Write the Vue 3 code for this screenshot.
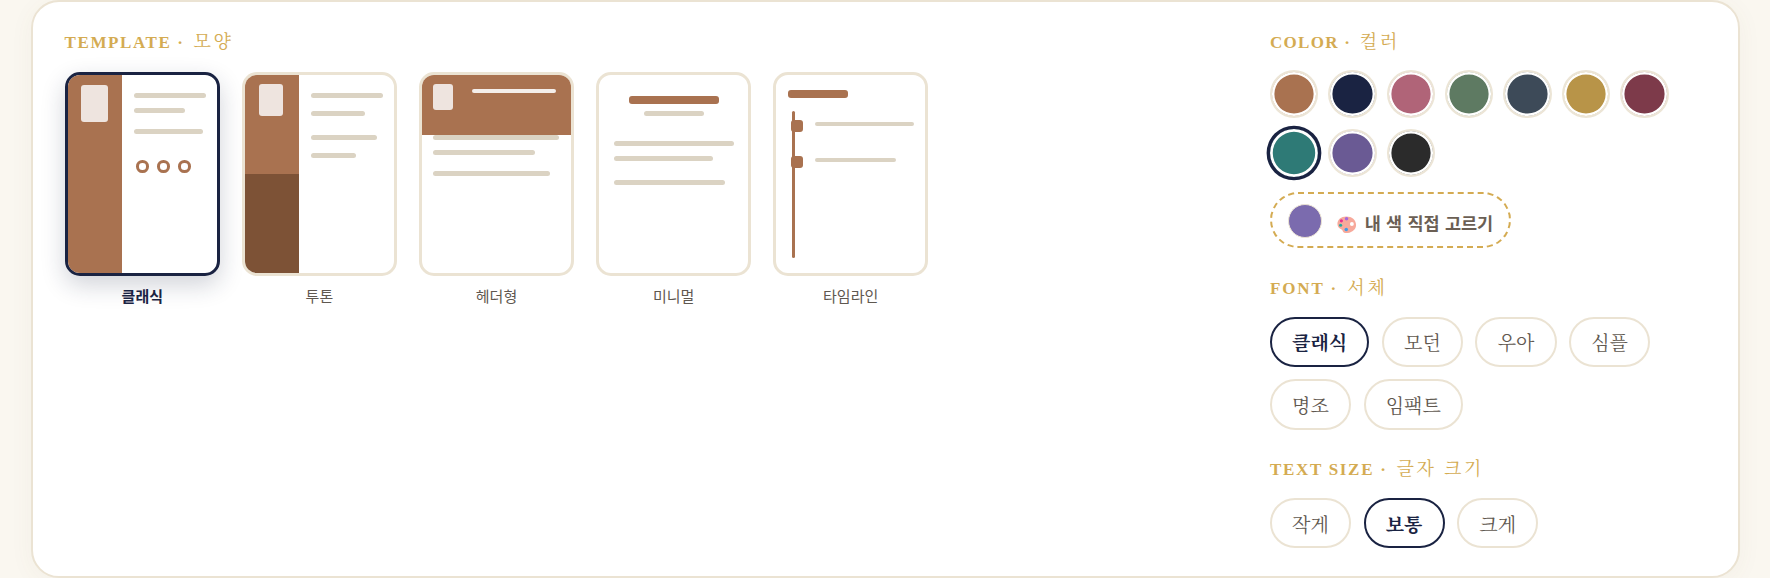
<script setup>
const swatches = [
  { c: '#a97250' }, { c: '#1a2342' }, { c: '#b06478' }, { c: '#5e7a62' }, { c: '#3d4a58' },
  { c: '#b89448' }, { c: '#7d3a4a' }, { c: '#2e7a76', active: true }, { c: '#6a5a94' }, { c: '#2b2b2b' },
]
const fonts = [
  { t: '클래식', active: true }, { t: '모던' }, { t: '우아' }, { t: '심플' }, { t: '명조' }, { t: '임팩트' },
]
const sizes = [{ t: '작게' }, { t: '보통', active: true }, { t: '크게' }]
const lines = (arr) => arr.map(([w, mt]) => ({ width: w + 'px', marginTop: mt + 'px' }))
const classic = lines([[72, 0], [51, 10.5], [69, 16.5]])
const twotone = lines([[72, 0], [54, 13.5], [66, 19.5], [45, 13.5]])
const header = lines([[126, 0], [102, 10.5], [117, 16.5]])
const minimal = lines([[120, 0], [99, 10.5], [111, 19.5]])
const timeline = [{ width: '99px' }, { width: '81px' }]
</script>

<template>
  <div class="page">
    <section class="card">
      <div class="left">
        <h3 class="label"><span class="en">TEMPLATE · </span><span class="ko">모양</span></h3>
        <div class="thumbs">
          <div class="thumb-item active">
            <div class="thumb t-classic">
              <div class="side"><div class="photo"></div></div>
              <div class="main">
                <div v-for="(s, i) in classic" :key="i" class="line" :style="s"></div>
                <div class="dots"><i></i><i></i><i></i></div>
              </div>
            </div>
            <div class="thumb-name">클래식</div>
          </div>
          <div class="thumb-item">
            <div class="thumb t-two">
              <div class="side">
                <div class="side-top"><div class="photo"></div></div>
                <div class="side-bottom"></div>
              </div>
              <div class="main">
                <div v-for="(s, i) in twotone" :key="i" class="line" :style="s"></div>
              </div>
            </div>
            <div class="thumb-name">투톤</div>
          </div>
          <div class="thumb-item">
            <div class="thumb t-header">
              <div class="head">
                <div class="photo"></div>
                <div class="white-line"></div>
              </div>
              <div class="main">
                <div v-for="(s, i) in header" :key="i" class="line" :style="s"></div>
              </div>
            </div>
            <div class="thumb-name">헤더형</div>
          </div>
          <div class="thumb-item">
            <div class="thumb t-minimal">
              <div class="title"></div>
              <div class="sub"></div>
              <div class="main">
                <div v-for="(s, i) in minimal" :key="i" class="line" :style="s"></div>
              </div>
            </div>
            <div class="thumb-name">미니멀</div>
          </div>
          <div class="thumb-item">
            <div class="thumb t-time">
              <div class="title"></div>
              <div class="track">
                <div class="rail"></div>
                <div v-for="(s, i) in timeline" :key="i" class="event">
                  <b class="node"></b>
                  <div class="line" :style="s"></div>
                </div>
              </div>
            </div>
            <div class="thumb-name">타임라인</div>
          </div>
        </div>
      </div>

      <div class="right">
        <h3 class="label color-label"><span class="en">COLOR · </span><span class="ko">컬러</span></h3>
        <div class="swatches">
          <button
            v-for="s in swatches"
            :key="s.c"
            class="swatch"
            :class="{ active: s.active }"
            :style="{ backgroundColor: s.c }"
          ></button>
        </div>
        <div class="custom">
          <span class="custom-dot"></span>
          <svg class="palette" viewBox="0 0 20 18" aria-hidden="true">
            <path d="M9.5 0.5C4.2 0.5 0.4 3.6 0.4 8.2c0 3.2 2.2 4.6 3.8 5.4 1.4.7 1.5 1.5 1.9 2.4.5 1.1 1.7 1.6 3.2 1.6 5.6 0 10.3-3.6 10.3-8.4C19.6 4 15.2.5 9.500.5z" fill="#f7a99b"/>
            <circle cx="15.3" cy="8.2" r="2" fill="#fff"/>
            <circle cx="9.8" cy="2.7" r="1.8" fill="#a668dc"/>
            <circle cx="4.5" cy="5" r="1.6" fill="#e8308f"/>
            <circle cx="3.7" cy="9.5" r="1.6" fill="#22a8a0"/>
            <circle cx="9.5" cy="14" r="1.8" fill="#3f9be6"/>
          </svg>
          <span class="custom-text">내 색 직접 고르기</span>
        </div>

        <h3 class="label font-label"><span class="en">FONT · </span><span class="ko">서체</span></h3>
        <div class="pills font-pills">
          <button v-for="f in fonts" :key="f.t" class="pill" :class="{ active: f.active }">{{ f.t }}</button>
        </div>

        <h3 class="label size-label"><span class="en">TEXT SIZE · </span><span class="ko">글자 크기</span></h3>
        <div class="pills size-pills">
          <button v-for="f in sizes" :key="f.t" class="pill" :class="{ active: f.active }">{{ f.t }}</button>
        </div>
      </div>
    </section>
  </div>
</template>

<style>
html, body { margin: 0; background: #faf7f0; overflow: hidden; }
</style>

<style scoped>
.page {
  height: 578px;
  padding: 0 30.5px;
  box-sizing: border-box;
  background: #faf7f0;
  overflow: hidden;
}
.card {
  box-sizing: border-box;
  height: 577.5px;
  background: #fff;
  border: 2px solid #ebe3d3;
  border-radius: 28px;
  padding: 28px 32px 0;
  display: flex;
  justify-content: space-between;
  box-shadow: 0 4px 24px rgba(120, 95, 60, 0.05);
}
.label {
  margin: 0;
  height: 24px;
  line-height: 20.5px;
  font-size: 17px;
  font-weight: 700;
  color: #d4ab52;
  letter-spacing: 1.6px;
  white-space: pre;
  font-family: "Liberation Serif", "Noto Serif CJK KR", serif;
}
.color-label { letter-spacing: 1.3px; }
.font-label { letter-spacing: 1.9px; }
.size-label { letter-spacing: 1.7px; }
.label .ko {
  font-size: 18px;
  font-weight: 400;
  letter-spacing: 2.7px;
  margin-left: 3px;
  font-family: "Noto Serif CJK KR", "Noto Sans CJK KR", serif;
}
.thumbs { display: flex; gap: 21.5px; margin-top: 18px; }
.thumb-item { width: 155.6px; text-align: center; }
.thumb {
  box-sizing: border-box;
  width: 155.6px;
  height: 204px;
  border: 3px solid #ebe3d3;
  border-radius: 15px;
  overflow: hidden;
  background: #fff;
}
.active .thumb {
  border-color: #1a2342;
  box-shadow: 0 9px 24px rgba(26, 35, 66, 0.2);
}
.thumb-name {
  margin-top: 9px;
  height: 22px;
  line-height: 22px;
  font-size: 15px;
  color: #5f5850;
  font-family: "Noto Sans CJK KR", sans-serif;
}
.active .thumb-name { color: #1a2342; font-weight: 700; }
.photo { background: #eee4df; border-radius: 3px; }
.line { height: 4.5px; border-radius: 3px; background: #dbd3c3; }

.t-classic, .t-two { display: flex; }
.t-classic .side { width: 54px; background: #a97250; padding: 10px 0 0 13.5px; box-sizing: border-box; }
.t-classic .photo { width: 27px; height: 36.5px; }
.t-classic .main { padding: 18px 0 0 12px; }
.dots { display: flex; gap: 8.5px; margin: 26.8px 0 0 2.8px; }
.dots i {
  box-sizing: border-box;
  flex: none;
  width: 12.6px;
  height: 12.6px;
  border: 3.2px solid #a97250;
  border-radius: 50%;
}

.t-two .side { width: 54px; display: flex; flex-direction: column; }
.side-top { height: 99px; background: #a97250; padding: 9px 0 0 14.5px; box-sizing: border-box; }
.side-top .photo { width: 24px; height: 31.7px; }
.side-bottom { flex: 1; background: #7d5236; }
.t-two .main { padding: 18px 0 0 12px; }

.head {
  height: 60px;
  background: #a97250;
  display: flex;
  align-items: flex-start;
  padding: 9px 0 0 11.5px;
  box-sizing: border-box;
}
.head .photo { width: 19.5px; height: 25.7px; }
.white-line { width: 84px; height: 4.5px; margin: 4.5px 0 0 19.5px; border-radius: 3px; background: #f4eeea; }
.t-header .main { padding-left: 11.5px; }

.t-minimal .title { width: 90px; height: 7.5px; margin: 21px auto 0; background: #a97250; border-radius: 3px; }
.t-minimal .sub { width: 60px; height: 4.5px; margin: 7.5px auto 0; background: #dbd3c3; border-radius: 3px; }
.t-minimal .main { padding: 25.5px 0 0 15px; }

.t-time .title { width: 60px; height: 7.5px; margin: 15px 0 0 12px; background: #a97250; border-radius: 3px; }
.track { position: relative; margin: 13.5px 0 0 15px; height: 147px; padding-top: 9px; box-sizing: border-box; }
.rail { position: absolute; left: 1.5px; top: 0; bottom: 0; width: 3px; background: #a97250; border-radius: 2px; }
.event { position: relative; display: flex; height: 36px; }
.node { width: 12px; height: 12px; border-radius: 3px; background: #a97250; flex: none; }
.event .line { margin: 1.5px 0 0 12px; }

.right { width: 435.6px; flex: none; }
.swatches { display: flex; flex-wrap: wrap; gap: 10.7px 10.1px; margin-top: 16.3px; }
.swatch {
  box-sizing: border-box;
  width: 48.3px;
  height: 48px;
  padding: 0;
  border: 2px solid #ece5d6;
  border-radius: 50%;
  background-clip: padding-box;
  box-shadow: inset 0 0 0 2.4px #fff;
}
.swatch.active {
  border: 3px solid #1a2342;
  transform: scale(1.14);
}
.custom {
  box-sizing: border-box;
  width: 241px;
  height: 56.5px;
  margin-top: 15px;
  border: 2px dashed #d4ab52;
  border-radius: 29px;
  display: flex;
  align-items: center;
  padding-left: 16.3px;
}
.custom-dot {
  box-sizing: border-box;
  width: 34px;
  height: 34px;
  margin-top: 1.4px;
  border-radius: 50%;
  background: #7b6bae;
  border: 1.5px solid #ebe3d3;
  flex: none;
}
.palette { width: 19.5px; height: 17.5px; margin: 9px 0 0 15px; flex: none; }
.custom-text {
  margin: 6px 0 0 8px;
  font-size: 17.5px;
  line-height: 24px;
  font-weight: 700;
  word-spacing: 1.3px;
  color: #6b5f54;
  white-space: nowrap;
  font-family: "Noto Sans CJK KR", sans-serif;
}
.font-label { margin-top: 27.5px; }
.size-label { margin-top: 27px; }
.pills { display: flex; flex-wrap: wrap; gap: 11.7px 12.5px; }
.font-pills { margin-top: 16.7px; }
.size-pills { margin-top: 17.3px; }
.pill {
  box-sizing: border-box;
  height: 50.6px;
  padding: 0 20.2px;
  background: #fff;
  border: 2px solid #ebe3d3;
  border-radius: 26px;
  font-size: 19px;
  color: #5f5850;
  font-family: "Noto Serif CJK KR", "Liberation Serif", "Noto Sans CJK KR", serif;
}
.pill.active {
  border-color: #1a2342;
  color: #1a2342;
  font-weight: 700;
}
</style>
